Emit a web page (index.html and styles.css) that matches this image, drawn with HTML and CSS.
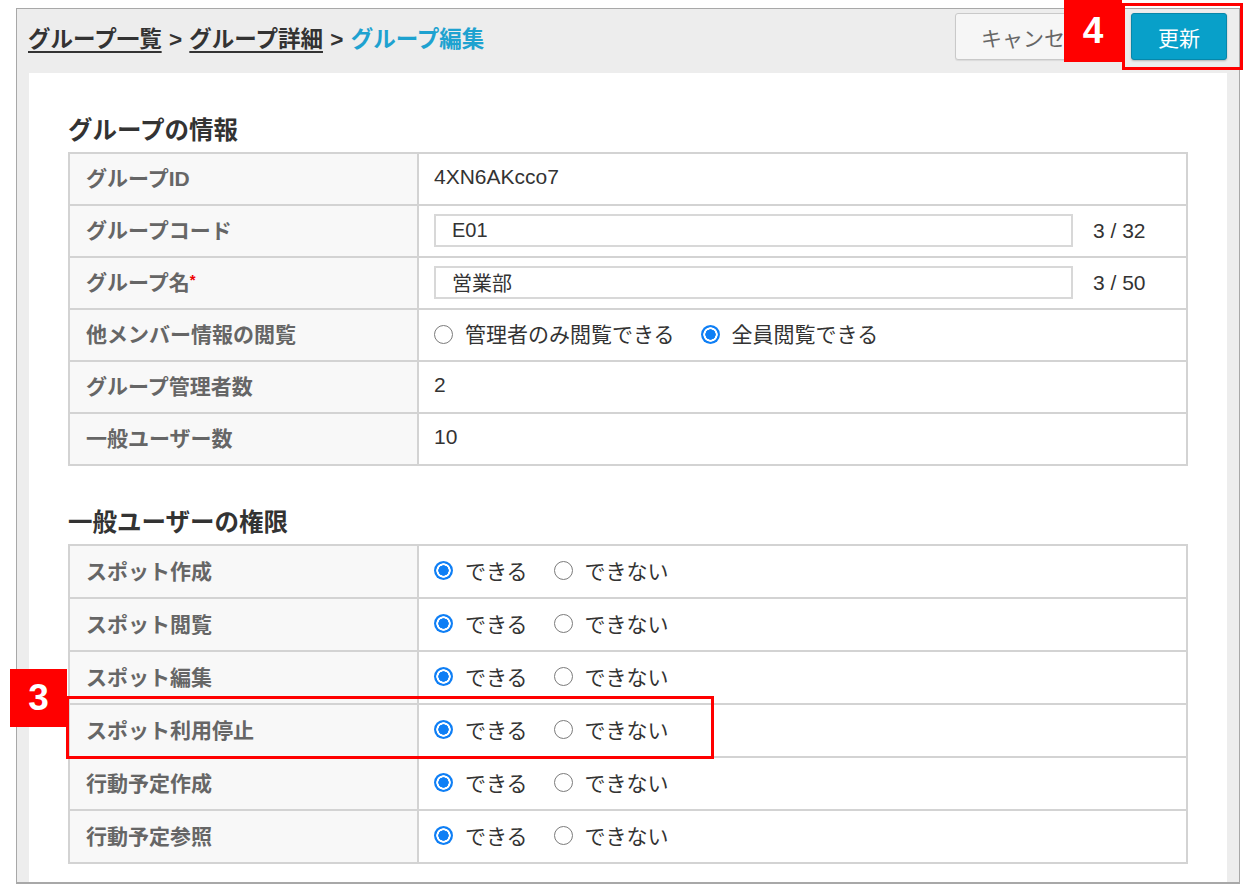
FILE: index.html
```html
<!DOCTYPE html>
<html lang="ja">
<head>
<meta charset="utf-8">
<title>グループ編集</title>
<link rel="stylesheet" href="styles.css">
</head>
<body>
<div class="frame">
  <header class="topbar">
    <nav class="crumbs">
      <a href="#">グループ一覧</a> &gt; <a href="#">グループ詳細</a> &gt; <span class="current">グループ編集</span>
    </nav>
    <div class="actions">
      <button class="btn btn-cancel">キャンセル</button>
      <div class="update-wrap">
        <button class="btn btn-primary">更新</button>
        <span class="note-box note-box-4"></span>
        <span class="badge badge-4">4</span>
      </div>
    </div>
  </header>

  <main class="panel">
    <h2 class="section-title">グループの情報</h2>
    <table class="grid grid-info">
      <tr>
        <td class="label">グループID</td>
        <td class="value">4XN6AKcco7</td>
      </tr>
      <tr>
        <td class="label">グループコード</td>
        <td class="value">
          <div class="field"><input class="text-input" type="text" value="E01"><span class="count">3 / 32</span></div>
        </td>
      </tr>
      <tr>
        <td class="label">グループ名<span class="req">*</span></td>
        <td class="value">
          <div class="field"><input class="text-input" type="text" value="営業部"><span class="count">3 / 50</span></div>
        </td>
      </tr>
      <tr>
        <td class="label">他メンバー情報の閲覧</td>
        <td class="value">
          <div class="choices">
            <label class="opt"><input class="radio" type="radio" name="view">管理者のみ閲覧できる</label>
            <label class="opt"><input class="radio" type="radio" name="view" checked>全員閲覧できる</label>
          </div>
        </td>
      </tr>
      <tr>
        <td class="label">グループ管理者数</td>
        <td class="value">2</td>
      </tr>
      <tr>
        <td class="label">一般ユーザー数</td>
        <td class="value">10</td>
      </tr>
    </table>

    <h2 class="section-title section-gap">一般ユーザーの権限</h2>
    <table class="grid grid-perm">
      <tr>
        <td class="label">スポット作成</td>
        <td class="value"><div class="choices">
          <label class="opt"><input class="radio" type="radio" name="p1" checked>できる</label>
          <label class="opt"><input class="radio" type="radio" name="p1">できない</label>
        </div></td>
      </tr>
      <tr>
        <td class="label">スポット閲覧</td>
        <td class="value"><div class="choices">
          <label class="opt"><input class="radio" type="radio" name="p2" checked>できる</label>
          <label class="opt"><input class="radio" type="radio" name="p2">できない</label>
        </div></td>
      </tr>
      <tr>
        <td class="label">スポット編集</td>
        <td class="value"><div class="choices">
          <label class="opt"><input class="radio" type="radio" name="p3" checked>できる</label>
          <label class="opt"><input class="radio" type="radio" name="p3">できない</label>
        </div></td>
      </tr>
      <tr>
        <td class="label anchor">スポット利用停止<span class="note-box note-box-3"></span><span class="badge badge-3">3</span></td>
        <td class="value"><div class="choices">
          <label class="opt"><input class="radio" type="radio" name="p4" checked>できる</label>
          <label class="opt"><input class="radio" type="radio" name="p4">できない</label>
        </div></td>
      </tr>
      <tr>
        <td class="label">行動予定作成</td>
        <td class="value"><div class="choices">
          <label class="opt"><input class="radio" type="radio" name="p5" checked>できる</label>
          <label class="opt"><input class="radio" type="radio" name="p5">できない</label>
        </div></td>
      </tr>
      <tr>
        <td class="label">行動予定参照</td>
        <td class="value"><div class="choices">
          <label class="opt"><input class="radio" type="radio" name="p6" checked>できる</label>
          <label class="opt"><input class="radio" type="radio" name="p6">できない</label>
        </div></td>
      </tr>
    </table>
  </main>
</div>
</body>
</html>
```

FILE: styles.css
```css
* { box-sizing: border-box; }

body {
  margin: 0;
  background: #fff;
  color: #333;
  font-family: "Liberation Sans", "Noto Sans CJK JP", sans-serif;
}

.frame {
  margin: 8px 0 0 16px;
  width: 1224px;
  height: 876px;
  border: 1px solid #a8a8a8;
  border-bottom-width: 2px;
  background: #ededed;
  display: flex;
  flex-direction: column;
}

.topbar {
  flex: none;
  height: 64px;
  padding: 0 12px 9px 11px;
  display: flex;
  align-items: center;
  justify-content: space-between;
}

.crumbs {
  font-size: 22.5px;
  font-weight: bold;
  color: #333;
  white-space: nowrap;
  word-spacing: 1px;
}

.crumbs a {
  color: #333;
  text-decoration: underline;
  text-decoration-thickness: 2px;
  text-underline-offset: 4px;
}

.crumbs .current { color: #1ea2d0; }

.actions {
  display: flex;
  align-items: center;
  gap: 12px;
}

.btn {
  height: 47px;
  font-family: inherit;
  font-size: 21px;
  border-radius: 3px;
  padding: 0;
  cursor: pointer;
  white-space: nowrap;
}

.btn-cancel {
  width: 164px;
  background: #f6f6f6;
  border: 1px solid #c9c9c9;
  color: #666;
  box-shadow: 0 1px 1px rgba(0,0,0,0.08);
  text-align: left;
  padding-left: 25px;
}

.btn-primary {
  width: 96px;
  background: #08a0c9;
  border: 1px solid #0787aa;
  color: #fff;
  box-shadow: 0 1px 2px rgba(0,0,0,0.25);
}

.update-wrap { position: relative; }

.note-box {
  position: absolute;
  border: 3px solid #f00;
  pointer-events: none;
}

.note-box-4 {
  left: -9px;
  top: -10px;
  width: 121px;
  height: 67px;
}

.badge {
  position: absolute;
  background: #f00;
  color: #fff;
  font-family: "Liberation Sans", sans-serif;
  font-weight: bold;
  font-size: 37px;
  display: flex;
  align-items: center;
  justify-content: center;
}

.badge-4 {
  left: -67px;
  top: -13px;
  width: 58px;
  height: 62px;
}

.panel {
  flex: 1;
  margin: 0 12px;
  background: #fff;
  padding: 42px 39px 0 39px;
}

.section-title {
  margin: 0 0 5px;
  font-size: 24.5px;
  line-height: 32px;
  font-weight: bold;
  color: #333;
}

.section-gap { margin-top: 41px; }

.grid {
  width: 100%;
  border-collapse: collapse;
}

.grid td {
  border: 2px solid #d3d3d3;
  font-size: 21px;
  padding: 0 0 4px;
}

.grid-info td { height: 52px; }
.grid-perm td { height: 53px; }

.grid .label {
  width: 349px;
  background: #f8f8f8;
  color: #666;
  font-weight: bold;
  padding-left: 16px;
  padding-right: 16px;
}

.grid .value {
  color: #333;
  padding-left: 15px;
  padding-right: 16px;
}

.req {
  color: #e00;
  font-size: 15px;
  vertical-align: 5px;
}

.field {
  display: flex;
  align-items: center;
  gap: 20px;
  margin-top: 3px;
}

.text-input {
  width: 639px;
  height: 33px;
  border: 2px solid #d8d8d8;
  padding: 0 16px;
  font-family: inherit;
  font-size: 20px;
  color: #333;
  background: #fff;
}

.count { white-space: nowrap; }

.choices {
  display: flex;
  align-items: center;
  gap: 26px;
}

.opt {
  display: inline-flex;
  align-items: center;
  gap: 12px;
  white-space: nowrap;
}

.radio {
  appearance: none;
  -webkit-appearance: none;
  margin: 2px 0 0;
  width: 19px;
  height: 19px;
  border-radius: 50%;
  border: 1.5px solid #7b7b7b;
  background: #fff;
}

.radio:checked {
  border: none;
  background: radial-gradient(circle closest-side, #0f7ff5 0 52%, #fff 57% 73%, #0f7ff5 78%);
}

.anchor { position: relative; }

.note-box-3 {
  left: -4px;
  top: -9px;
  width: 648px;
  height: 63px;
}

.badge-3 {
  left: -60px;
  top: -36px;
  width: 57px;
  height: 58px;
}
```
